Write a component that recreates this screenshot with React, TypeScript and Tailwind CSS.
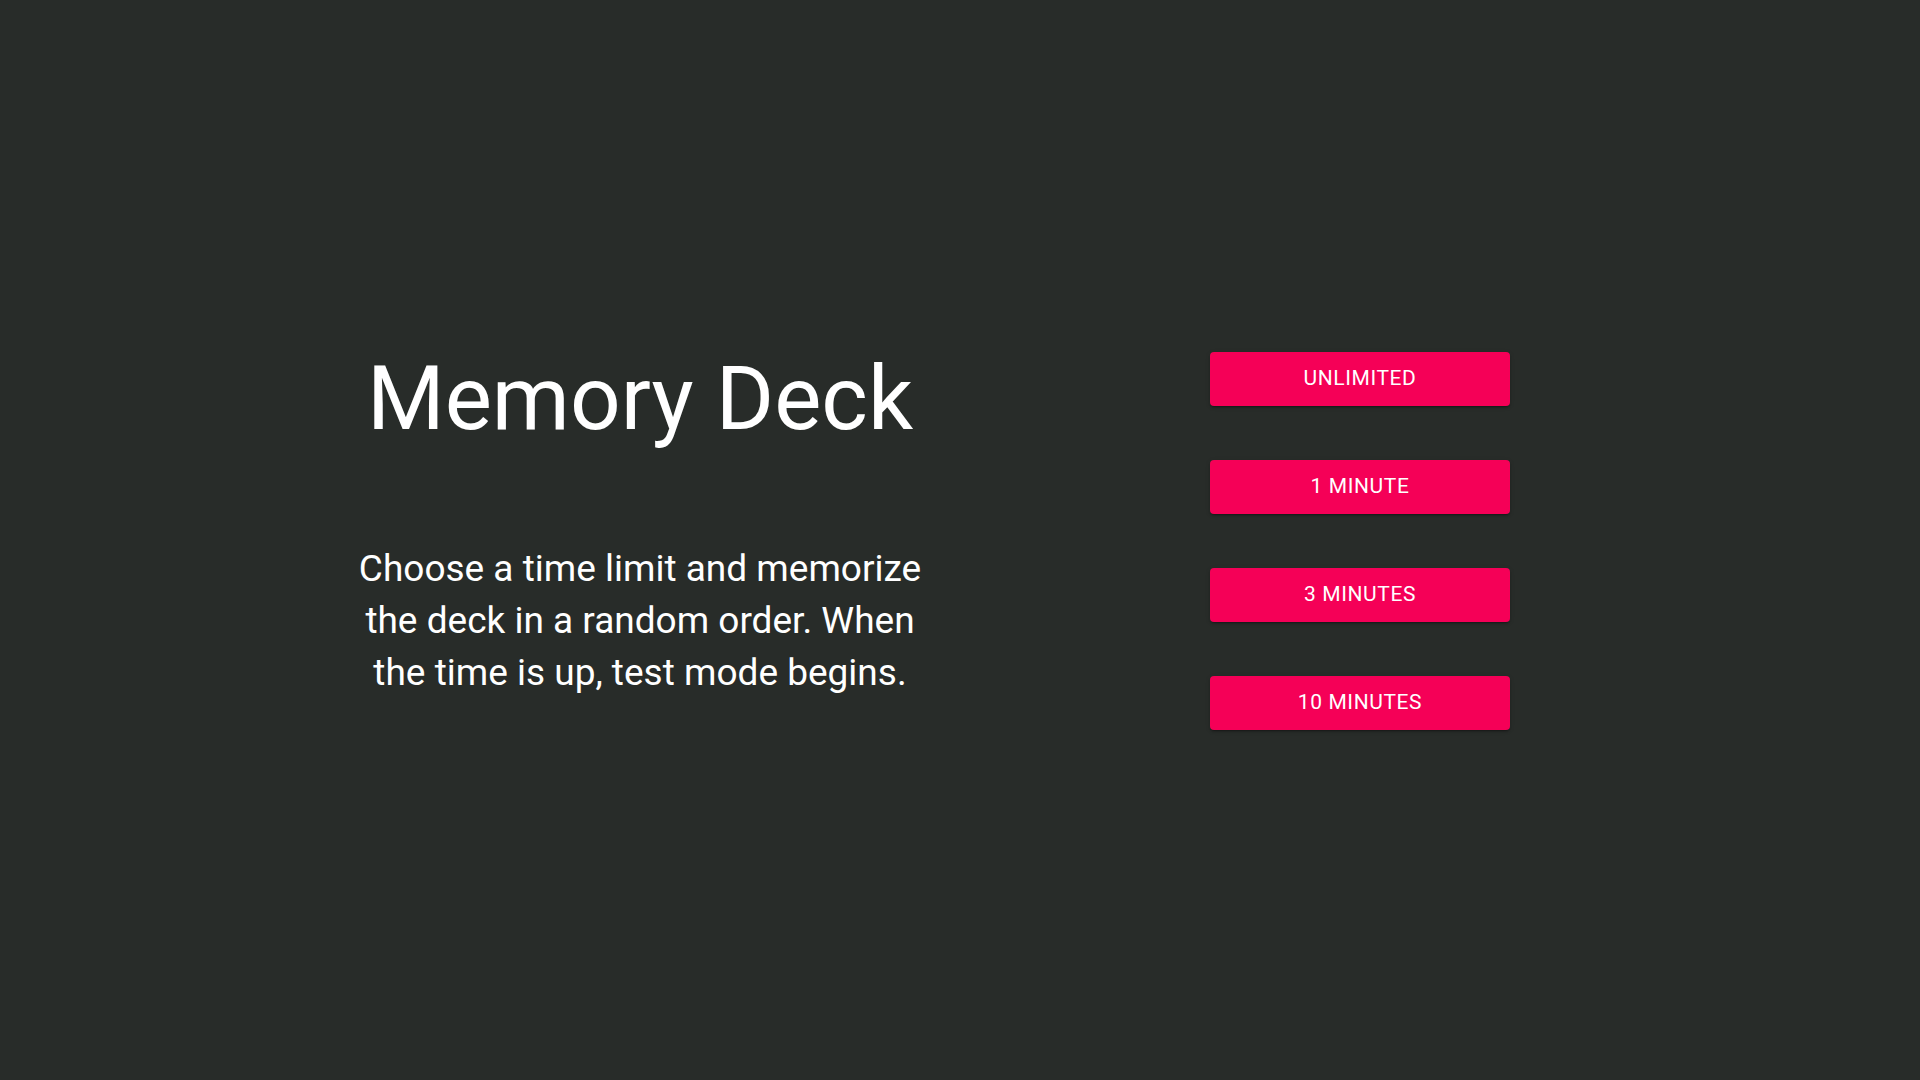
import React from 'react';

const options = ['Unlimited', '1 Minute', '3 Minutes', '10 Minutes'];

export default function App() {
  return (
    <div className="flex h-[1080px] w-full items-center bg-[#282c29] font-['Roboto',sans-serif] text-white">
      <div className="ml-[320px] flex w-[640px] flex-col items-center pb-[35px] text-center">
        <h1 className="text-[89px] leading-[105px] font-normal">Memory Deck</h1>
        <p className="mt-[92px] max-w-[580px] text-[37px] leading-[51.7px]">
          Choose a time limit and memorize the deck in a random order. When the time is up, test mode begins.
        </p>
      </div>
      <div className="ml-[250px] flex w-[300px] flex-col gap-[54px] pt-[2px]">
        {options.map((label) => (
          <button
            key={label}
            type="button"
            className="h-[54px] w-full rounded-[4px] bg-[#f50057] text-[21px] font-normal uppercase tracking-[0.02857em] text-white shadow-[0_3px_1px_-2px_rgba(0,0,0,0.2),0_2px_2px_0_rgba(0,0,0,0.14),0_1px_5px_0_rgba(0,0,0,0.12)]"
          >
            {label}
          </button>
        ))}
      </div>
    </div>
  );
}
